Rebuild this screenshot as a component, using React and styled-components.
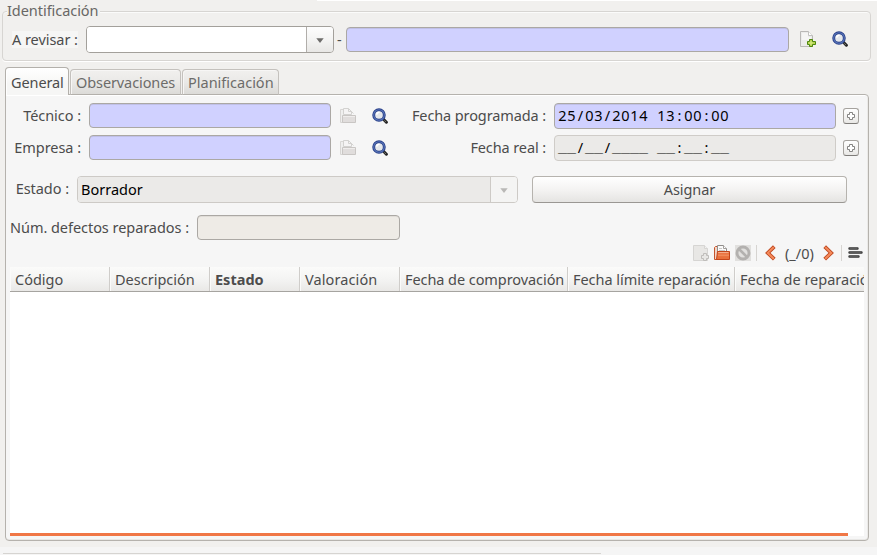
import React from "react";
import styled, { createGlobalStyle, css } from "styled-components";

const GlobalStyle = createGlobalStyle`
  *, *::before, *::after { box-sizing: border-box; }
  body { margin: 0; overflow: hidden; background: #f1f0ee; }
`;

const Window = styled.div`
  width: 877px;
  height: 555px;
  overflow: hidden;
  display: flex;
  flex-direction: column;
  background: #f1f0ee;
  color: #4c4c4c;
  font: 14.5px/20px "Noto Sans", "Open Sans", sans-serif;
  white-space: nowrap;
`;

const TopEdge = styled.div`
  flex: none;
  height: 1px;
  margin-left: 317px;
  background: #fff;
`;

const GroupBox = styled.section`
  position: relative;
  flex: none;
  display: flex;
  align-items: flex-start;
  width: 869px;
  height: 50px;
  margin: 10px 0 0 2px;
  padding: 14px 0 0 9px;
  border: 1px solid #d7d5d2;
  border-radius: 4px;
  box-shadow: 0 1px 0 #fff, inset 0 1px 0 #fbfbfa;
`;

const Legend = styled.div`
  position: absolute;
  left: 4px;
  top: -12px;
  height: 20px;
  padding-right: 1px;
  background: #f1f0ee;
  color: #686765;
  letter-spacing: -0.05px;
`;

const Label = styled.label`
  flex: none;
  width: ${(p) => p.$width}px;
  margin-right: ${(p) => p.$gap ?? 0}px;
  padding-top: ${(p) => p.$top ?? 2}px;
  letter-spacing: ${(p) => p.$track ?? -0.05}px;
  text-align: right;
`;

const ReviewLabel = styled(Label)`
  height: 17px;
  margin: 5px 8px 0 0;
  padding-top: 0;
  line-height: 17px;
  text-align: left;
  background: #f6f6f5;
`;

const Dash = styled.span`
  width: 12px;
  padding: 3px 0 0 3px;
`;

const Field = styled.div`
  flex: none;
  display: flex;
  align-items: flex-start;
  width: ${(p) => p.$width}px;
  height: ${(p) => p.$height ?? 25}px;
  margin-top: ${(p) => p.$top ?? 0}px;
  padding: 1px 0 0 3px;
  border: 1px solid #aba8a4;
  border-radius: 4px;
  background: #d0d1ff;
  box-shadow: inset 0 1px 0 #c0c0e8;
  color: #000;
  ${(p) =>
    p.$kind === "readonly" &&
    css`
      background: #eeebe6;
      box-shadow: inset 0 1px 0 #e0ddd8;
    `}
  ${(p) =>
    p.$kind === "disabled" &&
    css`
      border-color: #cfccc8;
      background: #ebeae8;
      box-shadow: none;
    `}
`;

const Combo = styled.div`
  flex: none;
  display: flex;
  width: ${(p) => p.$width}px;
  height: 27px;
  margin-top: ${(p) => p.$top ?? 0}px;
  overflow: hidden;
  border: 1px solid ${(p) => (p.$disabled ? "#cdcac6" : "#a3a09b")};
  border-radius: 4px;
`;

const ComboValue = styled.div`
  flex: 1;
  padding: 2px 0 0 3px;
  background: ${(p) => (p.$disabled ? "#ebeae8" : "#fff")};
  color: #000;
`;

const ComboArrow = styled.div`
  width: 27px;
  display: flex;
  align-items: center;
  justify-content: center;
  padding-top: 1px;
  border-left: 1px solid ${(p) => (p.$disabled ? "#cdcac6" : "#b1aeaa")};
  background: ${(p) =>
    p.$disabled ? "#f4f4f3" : "linear-gradient(#fdfdfd, #f4f4f3 50%, #e8e7e5)"};
  color: ${(p) => (p.$disabled ? "#b9b8b6" : "#6d6c6a")};
`;

const IconSlot = styled.span`
  flex: none;
  width: 16px;
  height: 16px;
  margin-left: ${(p) => p.$gap ?? 16}px;
  margin-top: 5px;
  svg { display: block; }
`;

const Tabs = styled.nav`
  position: relative;
  z-index: 1;
  flex: none;
  display: flex;
  align-items: flex-end;
  gap: 1px;
  height: 28px;
  margin: 6px 0 -1px 5px;
`;

const Tab = styled.div`
  width: ${(p) => p.$width}px;
  height: ${(p) => (p.$active ? 28 : 26)}px;
  padding: ${(p) => (p.$active ? "4px 0 0 5px" : "2px 0 0 5px")};
  border: 1px solid ${(p) => (p.$active ? "#b3b0ab" : "#c4c1bd")};
  border-bottom: ${(p) => (p.$active ? "none" : "1px solid #b3b0ab")};
  border-radius: 4px 4px 0 0;
  background: ${(p) =>
    p.$active
      ? "linear-gradient(#fff, #f6f6f5 60%)"
      : "linear-gradient(#f1f0ee, #eae9e7 50%, #dcdbd8)"};
  box-shadow: inset 1px 1px 0 ${(p) => (p.$active ? "#fff" : "#f7f6f5")};
  color: ${(p) => (p.$active ? "#4c4c4c" : "#6d6c6a")};
  letter-spacing: ${(p) => p.$track ?? 0}px;
`;

const Panel = styled.main`
  flex: none;
  width: 864px;
  height: 447px;
  margin-left: 5px;
  border: 1px solid #b5b2ad;
  border-radius: 0 4px 4px 4px;
  background: #f6f6f6;
  box-shadow: inset 0 1px 0 #fff, inset 0 -1px 0 #e8e7e5, inset -1px 0 0 #ebeae8;
`;

const Form = styled.div`
  padding-top: 8px;
`;

const FormRow = styled.div`
  display: flex;
  align-items: flex-start;
  height: ${(p) => p.$height}px;
`;

const Mask = styled.span`
  display: flex;
  height: 20px;
`;

const MaskCell = styled.span`
  width: 9px;
  text-align: center;
  ${(p) =>
    p.$blank &&
    css`
      padding-top: 2px;
      font-family: "Liberation Mono", monospace;
      font-size: 15px;
      font-weight: 700;
    `}
`;

const PlusButton = styled.button`
  flex: none;
  width: 16px;
  height: 16px;
  margin: 5px 0 0 7px;
  padding: 1px;
  border: 1px solid #a5a29e;
  border-bottom-color: #7e7c79;
  border-radius: 3px;
  background: linear-gradient(#fff, #e9e8e6);
  svg { display: block; }
`;

const ActionButton = styled.button`
  flex: none;
  width: 315px;
  height: 27px;
  margin: 9px 0 0 14px;
  padding: 0 0 1px;
  border: 1px solid #b6b3ae;
  border-bottom-color: #9a9793;
  border-radius: 4px;
  background: linear-gradient(#fff, #f3f2f1 55%, #e5e4e2);
  color: #4c4c4c;
  font: inherit;
  letter-spacing: -0.1px;
`;

const Toolbar = styled.div`
  display: flex;
  align-items: flex-start;
  height: 25px;
  margin-top: 2px;
  padding: 3px 0 0 687px;
`;

const ToolIcon = styled.span`
  flex: none;
  width: ${(p) => p.$width ?? 16}px;
  margin-right: ${(p) => p.$after ?? 5}px;
  svg { display: block; }
`;

const Separator = styled.span`
  flex: none;
  width: 1px;
  height: 16px;
  margin-right: ${(p) => p.$after}px;
  background: #d6d4d1;
`;

const Counter = styled.span`
  flex: none;
  width: 38px;
  margin-top: -2px;
`;

const Table = styled.div`
  width: 854px;
  height: 269px;
  margin-left: 4px;
  overflow: hidden;
  background: #fff;
  display: flex;
  flex-direction: column;
`;

const HeaderRow = styled.div`
  flex: none;
  display: flex;
  height: 25px;
  border-bottom: 1px solid #a6a4a0;
  background: linear-gradient(#fbfbfa, #f3f3f2 55%, #e9e8e6);
`;

const HeaderCell = styled.div`
  flex: none;
  width: ${(p) => p.$width}px;
  padding: 2px 0 0 5px;
  border-right: 1px solid #cfcdca;
  box-shadow: inset 1px 0 0 #fbfbfa;
  font-weight: ${(p) => (p.$bold ? 700 : 400)};
  letter-spacing: ${(p) => p.$track ?? 0}px;
`;

const Rows = styled.div`
  flex: 1;
`;

const Highlight = styled.div`
  flex: none;
  width: 838px;
  height: 3px;
  background: #f07746;
`;

const Footer = styled.footer`
  flex: none;
  height: 8px;
  margin-top: 6px;
  padding: 6px 0 0 3px;
  background: #f5f5f5;
`;

const FooterLine = styled.div`
  width: 598px;
  height: 1px;
  background: #d6d4d1;
`;

const Arrow = () => (
  <svg width="8" height="5" viewBox="0 0 8 5">
    <path d="M.3.3h7.4L4 5z" fill="currentColor" />
  </svg>
);

const NewIcon = ({ faded }) =>
  faded ? (
    <svg width="16" height="16" viewBox="0 0 16 16">
      <path d="M.5.5h11l3 3v12H.5z" fill="#e8e7e5" stroke="#d6d5d3" />
      <path d="M11.5.5v3h3" fill="#f2f2f1" stroke="#d6d5d3" />
      <path d="M10.5 8.5h3v2h2v3h-2v2h-3v-2h-2v-3h2z" fill="#e8e7e5" stroke="#bfbdba" />
    </svg>
  ) : (
    <svg width="16" height="16" viewBox="0 0 16 16">
      <path d="M.5.5h8l4 4v11H.5z" fill="#ececeb" stroke="#b9b8b6" />
      <path d="M2 2h6v4h3v3H2z" fill="#f5f5f4" />
      <path d="M8.5.5v4h4" fill="#fff" stroke="#c2c1bf" />
      <path d="M9.5 8.5h3v2h3v3h-3v2h-3v-2h-2v-3h2z" fill="#b4d24c" stroke="#4d870e" />
      <path d="M11 10v4M9 12h4" stroke="#d6e986" />
    </svg>
  );

const SearchIcon = () => (
  <svg width="17" height="16" viewBox="0 0 17 16">
    <path d="M11 10.8l3.4 3.4" stroke="#242424" strokeWidth="3" strokeLinecap="round" />
    <path d="M12.3 12.4l1.5 1.5" stroke="#85857b" strokeWidth="1" />
    <circle cx="7" cy="7" r="5.3" fill="#e4e7eb" stroke="#2b428a" strokeWidth="2.9" />
    <circle cx="7" cy="7" r="5.3" fill="none" stroke="#5874b8" strokeWidth="1.1" />
    <path d="M4.6 6.6a2.8 2.8 0 0 1 3-2.3" fill="none" stroke="#fff" strokeWidth="1.6" />
  </svg>
);

const FadedFolderIcon = () => (
  <svg width="16" height="16" viewBox="0 0 16 16">
    <path d="M.5 14.5v-13h4l1 1v12z" fill="#efefee" stroke="#d8d6d4" />
    <path d="M3.5 6.5v-6h5l3 3v3z" fill="#f5f4f4" stroke="#d3d2d0" />
    <path d="M8.5.5v3h3M10.5 2.5l3 3" fill="none" stroke="#d3d2d0" />
    <path d="M2.5 7.5h13v7h-13z" fill="#e0dddc" stroke="#c9c6c4" />
    <path d="M3 8.5h12" stroke="#efedec" />
  </svg>
);

const FolderIcon = () => (
  <svg width="16" height="16" viewBox="0 0 16 16">
    <path d="M.5 14.5V2.5l1-1h3l1 1v12z" fill="#f3d3c4" stroke="#c4542b" />
    <path d="M3.5 7V.5h6l3 3V7z" fill="#fafafa" stroke="#908d8a" />
    <path d="M5 3.5h3M5 5.5h6" stroke="#c9c7c5" />
    <path d="M9.5.5v3h3" fill="#fff" stroke="#a3a09d" />
    <path d="M3.5 6.5h12v8h-13z" fill="#e8703c" stroke="#c2451a" />
    <path d="M4.2 7.6h10.4" stroke="#f6b393" />
    <path d="M4 9.5h11v1.6H4z" fill="#f08a5a" />
  </svg>
);

const ForbiddenIcon = () => (
  <svg width="16" height="16" viewBox="0 0 16 16">
    <path d="M0 0h16v16H0z" fill="#e1e0de" />
    <circle cx="8" cy="8" r="6" fill="#e1e0de" stroke="#b3b1af" strokeWidth="2.8" />
    <path d="M4 4l8 8" stroke="#b3b1af" strokeWidth="2.6" />
  </svg>
);

const Chevron = ({ right }) => (
  <svg width="11" height="16" viewBox="0 0 11 16">
    <g transform={right ? "matrix(-1 0 0 1 11 0)" : undefined} fill="none">
      <path d="M9.3 1.6L2.8 7.9l6.5 6.3" stroke="#c04a22" strokeWidth="3.8" />
      <path d="M8.8 2.1L2.8 7.9l6 5.8" stroke="#f58b5c" strokeWidth="2" />
    </g>
  </svg>
);

const MenuIcon = () => (
  <svg width="15" height="16" viewBox="0 0 15 16">
    <path d="M1.5 3.5h8M1.5 7.5h12M1.5 11.5h9" stroke="#333" strokeWidth="2.4" strokeLinecap="round" />
    <path d="M1.5 3.5h8M1.5 7.5h12M1.5 11.5h9" stroke="#777" strokeWidth=".6" />
  </svg>
);

const Plus = () => (
  <PlusButton aria-label="+">
    <svg width="12" height="12" viewBox="0 0 12 12">
      <path d="M4.5 2.5h3v2h2v3h-2v2h-3v-2h-2v-3h2z" fill="#fff" stroke="#858483" />
    </svg>
  </PlusButton>
);

const MaskedText = ({ value }) => (
  <Mask>
    {[...value].map((c, i) => (
      <MaskCell key={i} $blank={c === "_"}>{c}</MaskCell>
    ))}
  </Mask>
);

const LookupRow = ({ label, dateLabel, date, dateKind }) => (
  <FormRow $height={32}>
    <Label $width={75} $gap={8}>{label}</Label>
    <Field $width={242} />
    <IconSlot $gap={9}><FadedFolderIcon /></IconSlot>
    <IconSlot><SearchIcon /></IconSlot>
    <Label $width={158} $gap={8} $track={-0.11}>{dateLabel}</Label>
    <Field $width={282} $height={26} $kind={dateKind}><MaskedText value={date} /></Field>
    <Plus />
  </FormRow>
);

const columns = [
  { name: "Código", width: 100 },
  { name: "Descripción", width: 100 },
  { name: "Estado", width: 90, bold: true },
  { name: "Valoración", width: 100, track: 0.1 },
  { name: "Fecha de comprovación", width: 168, track: -0.07 },
  { name: "Fecha límite reparación", width: 167, track: -0.04 },
  { name: "Fecha de reparación", width: 160 },
];

export default function App() {
  return (
    <>
      <GlobalStyle />
      <Window>
        <TopEdge />
        <GroupBox>
          <Legend>Identificación</Legend>
          <ReviewLabel $width={66}>A revisar :</ReviewLabel>
          <Combo $width={248}>
            <ComboValue />
            <ComboArrow><Arrow /></ComboArrow>
          </Combo>
          <Dash>-</Dash>
          <Field $width={443} $top={1} />
          <IconSlot $gap={11}><NewIcon /></IconSlot>
          <IconSlot><SearchIcon /></IconSlot>
        </GroupBox>

        <Tabs>
          <Tab $width={64} $active $track={-0.1}>General</Tab>
          <Tab $width={111} $track={-0.1}>Observaciones</Tab>
          <Tab $width={97}>Planificación</Tab>
        </Tabs>

        <Panel>
          <Form>
            <LookupRow label="Técnico :" dateLabel="Fecha programada :" date="25/03/2014 13:00:00" />
            <LookupRow label="Empresa :" dateLabel="Fecha real :" date="__/__/____ __:__:__" dateKind="disabled" />
          </Form>
          <FormRow $height={48}>
            <Label $width={63} $gap={8} $top={11}>Estado :</Label>
            <Combo $width={441} $top={9} $disabled>
              <ComboValue $disabled>Borrador</ComboValue>
              <ComboArrow $disabled><Arrow /></ComboArrow>
            </Combo>
            <ActionButton>Asignar</ActionButton>
          </FormRow>
          <FormRow $height={25}>
            <Label $width={183} $gap={8}>Núm. defectos reparados :</Label>
            <Field $width={203} $kind="readonly" />
          </FormRow>
          <Toolbar>
            <ToolIcon><NewIcon faded /></ToolIcon>
            <ToolIcon><FolderIcon /></ToolIcon>
            <ToolIcon><ForbiddenIcon /></ToolIcon>
            <Separator $after={8} />
            <ToolIcon $width={11} $after={9}><Chevron /></ToolIcon>
            <Counter>(_/0)</Counter>
            <ToolIcon $width={11} $after={7}><Chevron right /></ToolIcon>
            <Separator $after={6} />
            <ToolIcon $width={15} $after={0}><MenuIcon /></ToolIcon>
          </Toolbar>
          <Table>
            <HeaderRow>
              {columns.map((c) => (
                <HeaderCell key={c.name} $width={c.width} $bold={c.bold} $track={c.track}>{c.name}</HeaderCell>
              ))}
            </HeaderRow>
            <Rows />
            <Highlight />
          </Table>
        </Panel>
        <Footer><FooterLine /></Footer>
      </Window>
    </>
  );
}
